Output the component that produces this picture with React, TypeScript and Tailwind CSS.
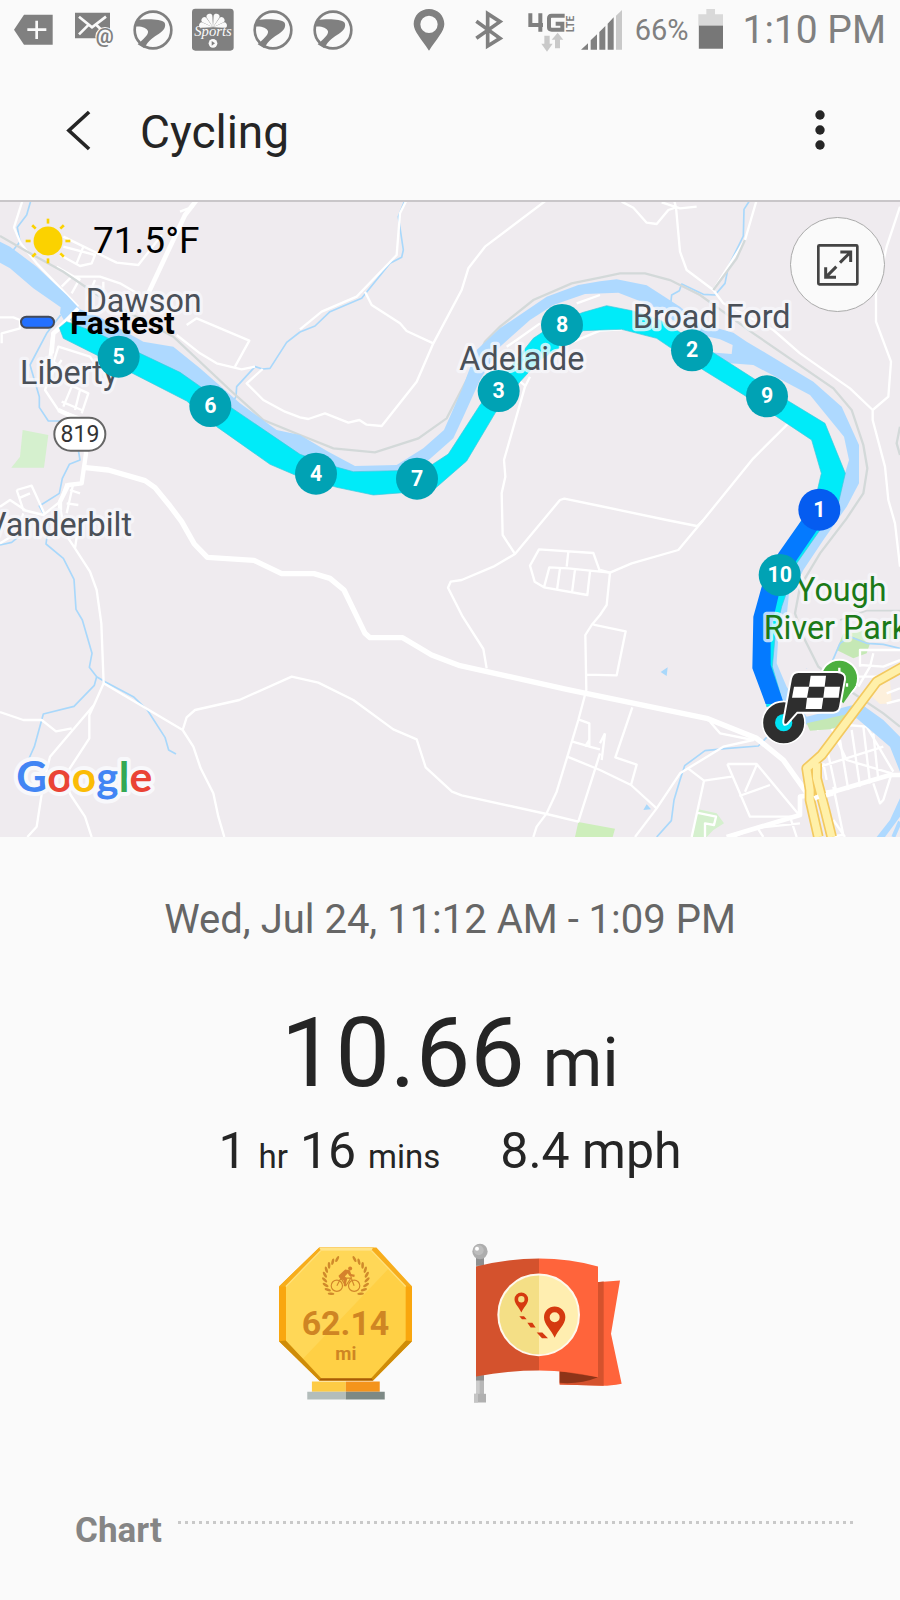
import type { ReactNode } from 'react';

const GRAY = '#808080';

function StatusIcon({ viewBox, className, children }: { viewBox: string; className: string; children: ReactNode }) {
  return (
    <svg viewBox={viewBox} className={`shrink-0 overflow-visible ${className}`} aria-hidden="true">
      {children}
    </svg>
  );
}

function SwooshIcon() {
  return (
    <StatusIcon viewBox="400 22 120 132" className="h-[44px] w-[40px]">
      <circle cx="460" cy="88" r="55" fill="none" stroke={GRAY} strokeWidth="8" />
      <path
        d="M411 59C440 54 484 55 495 66C500 78 492 90 478 99C462 109 446 118 434 143L414 131C430 116 447 103 445 92C442 81 424 76 406 78Z"
        fill={GRAY}
      />
    </StatusIcon>
  );
}

function StatusBar() {
  return (
    <div className="flex h-[60px] items-center justify-between pl-[13px] pr-[14px] text-[#808080]">
      <div className="flex items-center gap-5">
        <StatusIcon viewBox="39 22 120 132" className="h-[44px] w-[40px]">
          <path d="M42 87L72 42H158V132H72Z" fill={GRAY} />
          <path d="M110 60V115M82 87H139" stroke="#fafafa" strokeWidth="8" />
        </StatusIcon>
        <StatusIcon viewBox="219 22 120 132" className="h-[44px] w-[40px]">
          <path d="M225 36H330V113H225Z" fill={GRAY} />
          <path d="M237 48L276 80L318 48M237 101L264 74M318 101L290 74" fill="none" stroke="#fafafa" strokeWidth="8" />
          <circle cx="315" cy="108" r="29" fill="#fafafa" />
          <text x="314" y="127" textAnchor="middle" fontSize="60" fontFamily="Roboto, sans-serif" fontWeight="700" fill={GRAY}>
            @
          </text>
        </StatusIcon>
        <SwooshIcon />
        <StatusIcon viewBox="580 22 120 132" className="h-[44px] w-[40px]">
          <rect x="577" y="24" width="125" height="126" rx="10" fill={GRAY} />
          <g fill="#fafafa">
            {[-80, -50, -18, 18, 50, 80].map((a) => (
              <path key={a} d="M640 80L631 46C630 35 650 35 649 46Z" transform={`rotate(${a} 640 80)`} />
            ))}
            <circle cx="640" cy="128" r="13" />
          </g>
          <rect x="598" y="81" width="84" height="10" fill={GRAY} />
          <path d="M636 121L646 128L636 135Z" fill={GRAY} />
          <text x="640" y="107" textAnchor="middle" fontSize="44" fontStyle="italic" fontFamily="'Liberation Serif', serif" fill="#fafafa">
            Sports
          </text>
        </StatusIcon>
        <SwooshIcon />
        <SwooshIcon />
      </div>
      <div className="flex items-center">
        <StatusIcon viewBox="1224 22 120 132" className="h-[44px] w-[40px]">
          <path
            d="M1284 25C1258 25 1238 45 1238 70C1238 92 1262 116 1284 150C1306 116 1330 92 1330 70C1330 45 1310 25 1284 25ZM1284 45A26 26 0 1 1 1284 97A26 26 0 1 1 1284 45Z"
            fill={GRAY}
            fillRule="evenodd"
          />
        </StatusIcon>
        <StatusIcon viewBox="54 22 120 132" className="ml-5 h-[44px] w-[40px]">
          <path d="M76 62L147 113L110 136V39L147 63L76 113" fill="none" stroke={GRAY} strokeWidth="11" />
        </StatusIcon>
        <StatusIcon viewBox="228 22 150 132" className="ml-[18px] h-[44px] w-[50px]">
          <g fill="none" stroke={GRAY} strokeWidth="12">
            <path d="M238 38V73H276M268 38V93" />
            <path d="M341 45H302Q294 45 294 53V80Q294 87 302 87H334V69H314" />
          </g>
          <text x="368" y="95" transform="rotate(-90 368 95)" fontSize="31" fontWeight="700" fontFamily="Roboto, sans-serif" fill={GRAY}>
            LTE
          </text>
          <path d="M280 105H296V129H305L288 153L271 129H280ZM312 143H327V117H337L320 96L302 117H312Z" fill="#c9c9c9" />
        </StatusIcon>
        <StatusIcon viewBox="390 22 126 132" className="ml-1 h-[44px] w-[42px]">
          <path d="M390 147L411 128V147ZM419 147V119L438 101V147ZM445 147V94L463 76V147ZM470 147V69L488 50V147Z" fill={GRAY} />
          <path d="M495 147V45L513 28V147Z" fill="#c9c9c9" />
        </StatusIcon>
        <span className="ml-[12px] text-[29px] leading-[36px]">66%</span>
        <StatusIcon viewBox="744 22 78 132" className="ml-[10px] h-[44px] w-[26px]">
          <path d="M745 144V41H769V25H795V41H819V144Z" fill="#d9d9d9" />
          <path d="M747 75H819V144H747Z" fill="#777" />
        </StatusIcon>
        <span className="ml-[18px] text-[39px] leading-[48px]">1:10 PM</span>
      </div>
    </div>
  );
}

const ROUTE =
  'M178 383L200 365L290 398L540 517L610 566L900 763L1012 802L1060 815L1192 812L1290 798L1345 762L1440 615L1540 490L1600 415L1680 362L1750 337L1820 317L1900 333L1980 360L2140 458L2260 535L2360 600L2475 670L2536 820L2515 910L2460 990L2390 1090L2345 1220L2326 1300L2317 1400L2352 1520L2300 1520L2280 1400L2290 1250L2330 1100L2450 880L2464 820L2435 720L2330 650L2240 590L2110 510L1970 415L1865 388L1800 390L1750 392L1700 430L1620 480L1560 545L1485 640L1400 783L1300 870L1210 878L1120 885L1010 862L885 825L810 793L650 680L560 603L300 470L190 415Z';

const BLUE_ROUTE = 'M2405 960L2335 1060L2285 1160L2260 1250L2257 1405L2297 1512L2352 1512L2312 1395L2312 1290L2335 1190L2390 1080L2455 985Z';

const RIVER =
  'M0 125L30 140L110 200L200 285L240 328L300 352L430 425L520 440L600 505L720 610L830 690L900 705L985 755L1065 798L1190 795L1270 745L1332 690L1385 570L1430 450L1500 385L1640 290L1735 255L1800 244L1850 238L1940 256L2040 320L2100 370L2200 398L2240 425L2440 545L2525 620L2577 735L2577 850L2540 920L2470 1020L2410 1110L2375 1180L2370 1250L2335 1310L2330 1390L2360 1460L2420 1550L2500 1530L2580 1510L2650 1560L2700 1610V1715L2670 1640L2570 1555L2480 1580L2390 1570L2300 1440L2300 1320L2340 1180L2420 1030L2535 820L2547 780L2532 710L2430 585L2260 495L2170 488L2110 455L2195 462L2198 435L2160 418L2080 400L1950 315L1855 278L1755 282L1660 315L1590 360L1500 440L1440 540L1390 650L1360 715L1275 790L1200 825L1060 825L900 790L700 660L500 520L300 420L200 375L180 340L182 322L100 265L30 205L0 188Z';

const MARKERS: { n: number; x: number; y: number; fill: string }[] = [
  { n: 5, x: 356, y: 470, fill: '#00a2b4' },
  { n: 6, x: 631, y: 618, fill: '#00a2b4' },
  { n: 4, x: 948, y: 821, fill: '#00a2b4' },
  { n: 7, x: 1251, y: 836, fill: '#00a2b4' },
  { n: 3, x: 1496, y: 573, fill: '#00a2b4' },
  { n: 8, x: 1686, y: 375, fill: '#00a2b4' },
  { n: 2, x: 2076, y: 451, fill: '#00a2b4' },
  { n: 9, x: 2301, y: 589, fill: '#00a2b4' },
  { n: 1, x: 2458, y: 929, fill: '#055cf0' },
  { n: 10, x: 2339, y: 1125, fill: '#00a2b4' },
];

function RouteMap() {
  return (
    <svg viewBox="0 6 2700 1905" className="block w-full" role="img" aria-label="Cycling route map" fontFamily="Roboto, sans-serif">
      <rect width="2700" height="1911" fill="#efebef" />

      {/* parks */}
      <g fill="#d5f0ce">
        <path d="M68 690L145 705L132 803H34L60 770Z" />
        <path d="M1735 1866L1845 1886L1838 1911H1725Z" fill="#cdeebb" />
        <path d="M2095 1828L2150 1840L2172 1870L2140 1890L2120 1911H2075Z" />
        <path d="M2540 1300L2700 1270V1315L2560 1325Z" />
      </g>
      <path d="M2530 1300L2610 1330L2600 1360L2560 1375L2510 1350Z" fill="#c5e8b5" />
      <path d="M2605 1480L2670 1440L2675 1510L2640 1512Z" fill="#fdf0dc" />

      {/* streams */}
      <g fill="none" stroke="#a9d8fb" strokeWidth="5" strokeLinejoin="round">
        <path d="M93 0L80 45L52 82L60 125L40 150" />
        <path d="M182 345L140 400L90 495L118 590V622L145 663H185L235 750L240 780L208 793L187 835L178 880L118 918L130 940M148 960L138 1032L190 1075L222 1138L228 1228L247 1260L276 1360L268 1402L290 1430L315 1445L400 1490L442 1530L495 1612L506 1650L528 1662M290 1430L283 1456L222 1519L130 1542L103 1640L85 1680M0 1035L35 1027L80 990" />
        <path d="M900 396L860 427L810 505L788 507L765 500L710 560L708 590L690 620M900 396L945 378L990 335L1085 295L1170 190L1205 172L1210 150L1195 50L1215 0" />
        <path d="M2250 0L2232 28L2230 108L2185 200L2175 250L2145 285L2110 283L2045 252L2038 272L2015 285L2010 330L2020 360" />
        <path d="M2375 1180L2365 1260L2390 1350L2420 1405M2490 1400L2520 1330L2550 1310L2600 1330L2650 1333L2700 1345" />
        <path d="M2300 1612L2275 1638L2175 1646L2115 1652L2054 1697L2040 1740L2022 1800L2014 1862L1970 1911" />
      </g>
      <path d="M1982 1416L2003 1402L2000 1428ZM1930 1830L1940 1813L1953 1828Z" fill="#a9d8fb" />
      <path d="M2700 1795L2670 1860L2630 1911H2655L2700 1850Z" fill="#aed9ff" />
      <path d="M2700 1865L2680 1911" stroke="#aed9ff" strokeWidth="12" />

      {/* minor roads */}
      <g fill="none" stroke="#fff" strokeWidth="7" strokeLinejoin="round">
        <path d="M68 0L42 82L62 130L110 190L235 320M0 352H40L60 360V385L5 400V430" />
        <path d="M580 20L540 35M485 105L415 195L350 188L190 110M190 140L285 165L275 190L240 198L180 165M250 140L230 190M185 260L215 230H300L360 250L420 285M215 280L240 235M260 300L285 240M170 200L240 240M310 285V245" />
        <path d="M560 375L590 355L748 422L705 500M530 405L600 460L650 490L725 508L765 500M788 507L740 550L790 600L855 635L900 652L925 657L975 640L1045 668L1078 660L1100 674L1145 678L1250 545L1300 430L1385 270L1405 205L1455 140L1640 0" />
        <path d="M900 388L965 335L1070 290L1190 165L1200 40L1220 0M1095 275L1115 315L1200 370L1220 393L1300 430" />
        <path d="M135 570L175 440L270 470L290 500M185 480L150 530L135 570L175 630L245 655M200 550L265 580L245 640M185 605L245 630M215 560L190 620M240 570L225 630M50 870L95 857L135 945M50 870L70 930L130 945L180 905L200 850M55 895L90 880M0 920L30 900L75 930M210 870L240 880M200 910L235 915M220 850L200 940M0 1030L50 1000L70 940M180 920L195 1000L225 1045L270 1115L290 1170L304 1270L311 1450M240 945L225 1045" />
        <path d="M311 1450L282 1515L150 1670L130 1750L110 1880L82 1911M282 1515L268 1545V1615L190 1735L212 1785L255 1850L275 1911M0 1536L70 1560H125L168 1594L215 1585M311 1450L548 1590L580 1640L602 1705L640 1780L655 1850L673 1911M548 1590L560 1552L585 1530L718 1500L875 1430L955 1448L1060 1500L1180 1588L1250 1618L1277 1702L1356 1775L1385 1786L1640 1842L1735 1865L1785 1708L1800 1660" />
        <path d="M1520 440L1550 420L1620 370M1730 310L1800 285M1720 425L1800 392L1865 388M1560 545L1577 558M1590 530L1575 560L1512 780L1516 830L1505 880L1508 1005L1545 1062L1480 1100L1385 1140L1352 1145L1344 1163L1388 1250L1450 1347L1460 1405M1545 1062L1630 960L1680 900L1693 896L1800 918L2000 960L2090 978M2110 960L2035 1050L1895 1090L1830 1118L1800 1110" />
        <path d="M1830 1118L1820 1215L1800 1245L1775 1275L1756 1305L1759 1470L1735 1560L1702 1670L1670 1775L1640 1840L1610 1880L1600 1911M1780 1274L1877 1294L1850 1426L1760 1424" />
        <path d="M1590 1097L1617 1048L1780 1059L1800 1115L1705 1105L1648 1102L1632 1162L1604 1145ZM1705 1055L1700 1100M1680 1105L1671 1170M1725 1108L1716 1178M1770 1115L1762 1185L1632 1162M1800 1115L1830 1118" />
        <path d="M2090 980L2110 960L2260 775L2365 670M1985 7L2040 25L2090 20M1865 5L1900 23L1940 68L1970 72L2005 30L2028 22L2022 0M2028 22L2040 155L2060 210L2140 270L2235 120L2270 0M2140 270L2170 310L2320 390L2400 460L2550 565L2618 630L2665 590L2673 485L2628 365V280L2660 140L2700 20M2618 630V660L2655 800L2665 900L2685 970L2700 1100" />
        <path d="M1735 1558L1768 1570V1640L1800 1648M1715 1624L1770 1640M1755 1640L1768 1620M1702 1670L1800 1710L1893 1755L1970 1825L1905 1911M1815 1600L1805 1680M1800 1630L1815 1600M1897 1522L1846 1672L1910 1694L1893 1755" />
        <path d="M1970 1825L2040 1720L2170 1640L2260 1620L2160 1600L2130 1565M2065 1706L2112 1742L2195 1730M2112 1742L2075 1911M2182 1692H2270L2400 1848M2182 1692L2250 1850L2380 1850M2218 1788L2310 1755M2270 1695L2235 1775M2090 1838L2148 1850L2142 1875L2115 1870V1911" />
        <path d="M2450 1590L2490 1575L2540 1680L2675 1720L2650 1800L2640 1810L2620 1750M2460 1700L2650 1640M2480 1740L2470 1690M2510 1780L2480 1640M2545 1770L2520 1620M2580 1760L2555 1590M2610 1750L2590 1580M2635 1740L2620 1600M2540 1575L2600 1580L2680 1715M2580 1400V1350H2700M2575 1460L2610 1400L2620 1360M2580 1395L2650 1400L2700 1380M2575 1430L2640 1430M2660 1480L2700 1465M2660 1510L2700 1500M2390 1911L2370 1850M2500 1860L2535 1911M2200 1911L2260 1885L2400 1870M2290 1911L2270 1880M2480 1911L2530 1905L2500 1760" />
      </g>

      {/* railway */}
      <g fill="none" stroke="#d3d9d9" strokeWidth="7">
        <path d="M0 108L90 160L190 215L300 290L520 410L690 570L790 660L900 705L1000 745L1125 757L1255 715L1340 655L1400 540L1455 425L1500 380L1600 300L1715 250L1800 233L1860 220H1935L2010 240L2100 285L2260 400L2500 565L2555 630L2590 735L2602 805L2590 880L2540 955L2460 1060L2400 1160L2385 1240L2410 1310L2455 1400L2560 1480L2650 1540L2700 1580" />
        <path d="M2235 120L2210 175L2140 270M2700 680L2690 730L2700 765" />
        <path d="M2520 1260L2600 1232H2700" strokeWidth="5" />
      </g>
      <path d={RIVER} fill="#aed9ff" />
      <path d="M2420 1570L2540 1543L2515 1580L2490 1588L2430 1592Z" fill="#c5e8b5" />
      <path d="M2375 1160L2365 1260L2390 1350L2420 1405" fill="none" stroke="#efebef" strokeWidth="12" />

      {/* major roads */}
      <g fill="none" stroke="#fff" strokeLinejoin="round">
        <path d="M590 0L555 45L440 290" strokeWidth="14" />
        <path d="M235 325L160 400L150 480L175 500" strokeWidth="12" />
        <path d="M210 360L160 400L155 460M175 630L250 665L258 760L245 850L205 855L180 905V930" strokeWidth="13" />
        <path d="M250 802L325 810L435 842L465 863L510 918L545 965L583 1032L622 1072L762 1081L845 1121H942L990 1135L1032 1170L1095 1300L1110 1313H1208L1295 1365L1380 1397L1700 1468L2120 1555L2270 1615L2350 1680L2425 1785" strokeWidth="16" />
        <path d="M2180 1911L2400 1845V1790L2500 1775L2670 1725H2700" strokeWidth="14" />
      </g>
      <g fill="none" strokeLinejoin="round">
        <path d="M2710 1400L2630 1445L2465 1665L2420 1705L2430 1770V1800L2455 1911M2450 1690L2450 1735L2475 1830L2495 1911" stroke="#f3c95f" strokeWidth="32" />
        <path d="M2710 1400L2630 1445L2465 1665L2420 1705L2430 1770V1800L2455 1911M2450 1690L2450 1735L2475 1830L2495 1911" stroke="#fff0a9" strokeWidth="22" />
        <path d="M2443 1795L2456 1790M2478 1786L2500 1780" stroke="#fff" strokeWidth="14" />
      </g>

      <path d={ROUTE} fill="#00ebf9" stroke="#3cc8dd" strokeWidth="2" />
      <path d={BLUE_ROUTE} fill="#047aff" />

      {/* place names */}
      <g fontSize="97" fill="#4a5058" stroke="#f8f8fb" strokeOpacity="0.75" strokeWidth="20" strokeLinejoin="round" paintOrder="stroke">
        <text x="257" y="335">Dawson</text>
        <text x="60" y="553">Liberty</text>
        <text x="396" y="1008" textAnchor="end">Vanderbilt</text>
        <text x="1378" y="511">Adelaide</text>
        <text x="1898" y="383">Broad Ford</text>
        <text x="2388" y="1202" fill="#1b7a17">Yough</text>
        <text x="2291" y="1316" fill="#1b7a17">River Park</text>
      </g>
      <rect x="163" y="653" width="153" height="99" rx="49" fill="#fff" stroke="#666" strokeWidth="6" />
      <text x="240" y="726" fontSize="69" textAnchor="middle" fill="#333">819</text>

      {/* park pin */}
      <circle cx="2518" cy="1435" r="56" fill="#4caf3f" stroke="#fff" strokeWidth="6" />
      <path d="M2474 1455L2530 1510L2568 1455Z" fill="#4caf3f" />
      <path d="M2518 1403V1420M2541 1450V1460" stroke="#fff" strokeWidth="7" />

      {MARKERS.map((m) => (
        <g key={m.n}>
          <circle cx={m.x} cy={m.y} r="63" fill={m.fill} />
          <text x={m.x} y={m.y + 21} fontSize="64" fontWeight="700" textAnchor="middle" fill="#fff">
            {m.n}
          </text>
        </g>
      ))}

      {/* start and finish */}
      <circle cx="2351" cy="1568" r="64" fill="#2e2e2e" stroke="#fff" strokeWidth="5" />
      <circle cx="2351" cy="1568" r="26" fill="#00e1f2" />
      <path
        d="M2395 1416H2512Q2538 1418 2535 1438L2520 1520Q2517 1537 2500 1538H2392L2362 1572Q2348 1580 2350 1562L2373 1436Q2377 1417 2395 1416Z"
        fill="#2e2e2e"
        stroke="#fff"
        strokeWidth="6"
      />
      <path
        d="M2432 1427H2478L2474 1460H2520L2516 1493H2470L2465 1527H2417L2421 1493H2376L2382 1460H2427Z M2427 1460L2421 1493H2470L2474 1460Z"
        fill="#fff"
        fillRule="evenodd"
      />

      <rect x="63" y="350" width="99" height="33" rx="16" fill="#2370ff" stroke="#444a58" strokeWidth="6" />
      <text x="210" y="403" fontSize="95" fontWeight="700" fill="#000">Fastest</text>

      <g fontFamily="Lato, sans-serif" fontSize="128" fontWeight="700">
        <text x="49" y="1775" stroke="#f8f8fb" strokeWidth="24" strokeLinejoin="round" paintOrder="stroke" fill="#4285f4">
          G<tspan fill="#ea4335">o</tspan><tspan fill="#fbbc05">o</tspan><tspan fill="#4285f4">g</tspan><tspan fill="#34a853">l</tspan><tspan fill="#ea4335">e</tspan>
        </text>
      </g>
    </svg>
  );
}

function SunIcon() {
  return (
    <svg viewBox="75 54 140 140" className="h-[46px] w-[46px]" aria-hidden="true">
      <circle cx="145" cy="124" r="44" fill="#fbd200" />
      <g stroke="#fbd200" strokeWidth="8">
        {[0, 45, 90, 135, 180, 225, 270, 315].map((a) => (
          <path key={a} d="M145 56V71" transform={`rotate(${a} 145 124)`} />
        ))}
      </g>
    </svg>
  );
}

function Laurel() {
  const leaves = [0, 1, 2, 3, 4, 5, 6, 7, 8];
  return (
    <g fill="#d08a2b">
      {leaves.map((i) => {
        const a = -24 - i * 14;
        return <ellipse key={i} cx="258" cy="82" rx="4" ry="10" transform={`rotate(${a} 258 146) rotate(50 258 82)`} />;
      })}
      {leaves.map((i) => {
        const a = 24 + i * 14;
        return <ellipse key={i} cx="258" cy="82" rx="4" ry="10" transform={`rotate(${a} 258 146) rotate(-50 258 82)`} />;
      })}
    </g>
  );
}

function DistanceBadge() {
  return (
    <svg viewBox="57 52 400 459" className="h-[153px] w-[133px]" role="img" aria-label="62.14 mi badge">
      <path d="M178 53H340L457 170V335L340 453H178L57 335V170Z" fill="#f9a60e" />
      <path d="M57 335L178 453H340L457 335L438 333H78Z" fill="#cf8c08" />
      <path d="M178 53H340L350 53L457 170L438 170L335 62H183L78 170H57Z" fill="#f7ad1c" />
      <path d="M178 453L184 445H334L340 453Z" fill="#a85b05" />
      <path d="M183 62H335L438 170V333L334 446H184L78 333V170Z" fill="#ffd045" />
      <path d="M183 62H335L387 116L130 387L78 333V170Z" fill="#ffd757" />
      <path d="M178 53H340L335 63H183Z" fill="#ffe48a" />
      <path d="M78 170L183 62M335 62L438 170" stroke="#ffe17c" strokeWidth="4" />
      <Laurel />
      <g fill="none" stroke="#d2872a" strokeWidth="3.5">
        <circle cx="231" cy="168" r="17" />
        <circle cx="283" cy="168" r="17" />
        <path d="M231 168L243 145L258 168L274 144L283 168M243 145H272M272 136L275 145M274 136H284" />
      </g>
      <path d="M236 138L256 119L270 121L274 133L285 138L283 142L268 138L264 130L255 140L262 147L257 168L252 170L252 153L238 143Z" fill="#d5822c" />
      <circle cx="271" cy="116" r="6" fill="#d5822c" />
      <text x="257" y="317" textAnchor="middle" fontFamily="Roboto, sans-serif" fontWeight="700" fontSize="102" fill="#cf8523">
        62.14
      </text>
      <text x="258" y="392" textAnchor="middle" fontFamily="Roboto, sans-serif" fontWeight="700" fontSize="56" fill="#cf8523">
        mi
      </text>
      <path d="M156 456H258V487H156Z" fill="#fdcb45" />
      <path d="M258 456H360V487H258Z" fill="#f4941c" />
      <path d="M142 487H258V510H142Z" fill="#b3bdbb" />
      <path d="M258 487H375V510H258Z" fill="#7d8985" />
    </svg>
  );
}

function PinShape({ transform }: { transform: string }) {
  return (
    <path
      transform={transform}
      d="M0 0C-10 -24 -32 -40 -32 -62A32 32 0 0 1 32 -62C32 -40 10 -24 0 0ZM0 -77A15 15 0 1 0 0 -47A15 15 0 1 0 0 -77Z"
      fillRule="evenodd"
      fill="#d5390f"
    />
  );
}

function FlagBadge() {
  return (
    <svg viewBox="66 40 450 479" className="h-[160px] w-[150px]" role="img" aria-label="Route flag badge">
      <path d="M78 80H102V495H78Z" fill="#b7b7b7" />
      <path d="M78 80H89V495H78Z" fill="#cbcbcb" />
      <path d="M78 84H102V108H78ZM78 436H102V452H78Z" fill="#8e8e8e" />
      <path d="M72 492H108V518H72Z" fill="#b0b0b0" />
      <path d="M72 492H84V518H72Z" fill="#c4c4c4" />
      <circle cx="90" cy="65" r="23" fill="#adadad" />
      <circle cx="86" cy="61" r="15" fill="#bdbdbd" />
      <circle cx="81" cy="57" r="6" fill="#fff" />
      <path d="M440 157L510 152L483 312L515 462Q480 468 461 468L329 464V420H440Z" fill="#ff643b" />
      <path d="M440 157L461 155V468L329 464V420L440 440Z" fill="#d4522d" />
      <path d="M329 424L444 442Q390 464 329 459Z" fill="#8e3418" />
      <path d="M78 110Q170 86 267 86V422Q170 422 78 440Z" fill="#d4522d" />
      <path d="M267 86Q360 86 444 110V442Q360 422 267 422Z" fill="#ff643b" />
      <circle cx="266" cy="255" r="120" fill="#f4df86" />
      <path d="M267 135A120 120 0 0 1 267 375Z" fill="#ffeeb0" />
      <circle cx="266" cy="255" r="121" fill="none" stroke="#fff8ec" strokeWidth="6" />
      <PinShape transform="translate(214 248) scale(.64)" />
      <PinShape transform="translate(314 324)" />
      <path d="M208 259H222L230 268H216ZM232 279H247L257 293H242ZM260 308H277L294 325H276Z" fill="#d5390f" />
    </svg>
  );
}

export default function App() {
  return (
    <div className="min-h-screen bg-[#fafafa] font-[Roboto,sans-serif] text-[#252525]">
      <StatusBar />

      <header className="flex h-[142px] items-center border-b-2 border-[#c9c6c9] pl-[58px] pr-[60px]">
        <button type="button" aria-label="Back" className="flex h-12 w-10 items-center justify-center">
          <svg viewBox="195 325 80 130" className="h-[43px] w-[27px]" aria-hidden="true">
            <path d="M267 334L206 390L267 446" fill="none" stroke="#252525" strokeWidth="11" />
          </svg>
        </button>
        <h1 className="ml-[42px] flex-1 pt-1 text-[46px] leading-[56px]">Cycling</h1>
        <button type="button" aria-label="More options" className="flex h-12 w-10 items-center justify-center">
          <svg viewBox="0 0 10 40" className="h-10 w-[10px]" aria-hidden="true">
            <circle cx="5" cy="5" r="4.7" fill="#252525" />
            <circle cx="5" cy="20" r="4.7" fill="#252525" />
            <circle cx="5" cy="35" r="4.7" fill="#252525" />
          </svg>
        </button>
      </header>

      <main>
        <section className="relative overflow-hidden">
          <RouteMap />
          <div className="absolute left-[25px] top-[16px] flex items-center gap-[22px] text-[37px] leading-[46px] text-black">
            <SunIcon />
            <span>71.5°F</span>
          </div>
          <button
            type="button"
            aria-label="Expand map"
            className="absolute right-[15px] top-[15px] flex h-[95px] w-[95px] items-center justify-center rounded-full border border-[#aaa] bg-[#fafafa]"
          >
            <svg viewBox="650 132 126 126" className="h-[42px] w-[42px]" fill="none" stroke="#444" aria-hidden="true">
              <rect x="654" y="136" width="117" height="117" rx="3" strokeWidth="8" />
              <path d="M719 188L748 159M720 156H751V186M708 200L679 229M676 202V232H707" strokeWidth="9" />
            </svg>
          </button>
        </section>

        <section className="flex flex-col items-center pt-[59px]">
          <p className="text-[40px] leading-[48px] text-[#666]">Wed, Jul 24, 11:12 AM - 1:09 PM</p>
          <p className="mt-[57px] flex items-baseline gap-[18px] leading-[104px]">
            <span className="text-[97px]">10.66</span>
            <span className="text-[68px]">mi</span>
          </p>
          <div className="mt-[8px] flex items-baseline gap-[60px] text-[50px] leading-[56px]">
            <p className="flex items-baseline gap-[12px]">
              <span>1</span>
              <span className="text-[33px]">hr</span>
              <span>16</span>
              <span className="text-[33px]">mins</span>
            </p>
            <p>8.4 mph</p>
          </div>
          <div className="mt-[58px] flex items-center gap-[60px]">
            <DistanceBadge />
            <FlagBadge />
          </div>
        </section>

        <section className="mt-[106px] flex items-start gap-[16px] pl-[75px] pr-[46px]">
          <h2 className="text-[35px] font-bold leading-[44px] text-[#858585]">Chart</h2>
          <div className="mt-[12px] h-[3px] flex-1 bg-[repeating-linear-gradient(90deg,#c9c9c9_0px,#c9c9c9_3px,transparent_3px,transparent_7px)]" />
        </section>
      </main>
    </div>
  );
}
